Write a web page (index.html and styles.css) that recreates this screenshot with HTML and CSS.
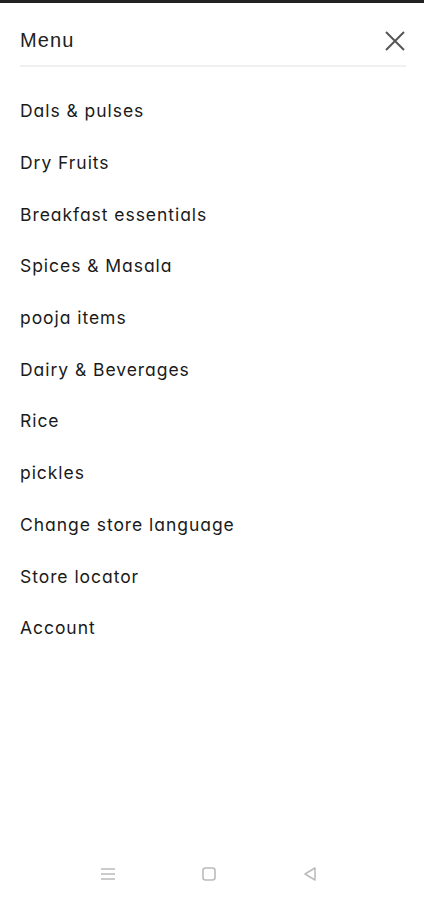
FILE: index.html
```html
<!DOCTYPE html>
<html lang="en">
<head>
  <meta charset="UTF-8" />
  <meta name="viewport" content="width=device-width, initial-scale=1.0" />
  <title>Menu</title>
  <link rel="stylesheet" href="styles.css">
</head>
<body>
  <div class="statusbar"></div>
  <div class="drawer">
    <div class="drawer-head">
      <span class="drawer-title">Menu</span>
      <button class="close-btn" aria-label="Close">
        <svg width="22" height="22" viewBox="0 0 22 22"><path d="M2 2 L20 20 M20 2 L2 20" stroke="#555" stroke-width="2" fill="none"/></svg>
      </button>
    </div>
    <ul class="menu-list">
      <li><a href="#">Dals &amp; pulses</a></li>
      <li><a href="#">Dry Fruits</a></li>
      <li><a href="#">Breakfast essentials</a></li>
      <li><a href="#">Spices &amp; Masala</a></li>
      <li><a href="#">pooja items</a></li>
      <li><a href="#">Dairy &amp; Beverages</a></li>
      <li><a href="#">Rice</a></li>
      <li><a href="#">pickles</a></li>
      <li><a href="#">Change store language</a></li>
      <li><a href="#">Store locator</a></li>
      <li><a href="#">Account</a></li>
    </ul>
  </div>
  <div class="navbar">
    <svg width="16" height="16" viewBox="0 0 16 16"><path d="M1 3 H15 M1 8 H15 M1 13 H15" stroke="#bbb" stroke-width="1.6"/></svg>
    <svg width="16" height="16" viewBox="0 0 16 16"><rect x="2" y="2" width="12" height="12" rx="2.5" stroke="#bbb" stroke-width="1.6" fill="none"/></svg>
    <svg width="16" height="16" viewBox="0 0 16 16"><path d="M13 2 V14 L3 8 Z" stroke="#bbb" stroke-width="1.5" fill="none" stroke-linejoin="round"/></svg>
  </div>
</body>
</html>
```

FILE: styles.css
```css
body { margin: 0; background: #fff; font-family: Inter, "Liberation Sans", sans-serif; color: #1a1a1a; height: 900px; display: flex; flex-direction: column; }
.statusbar { height: 3px; background: #222; }
.drawer { flex: 1; padding: 0 18px 0 20px; }
.drawer-head { display: flex; justify-content: space-between; align-items: center; height: 49px; border-bottom: 2px solid #f0f0f0; padding-top: 13px; }
.drawer-title { font-family: "Liberation Sans", Arial, sans-serif; font-size: 20px; letter-spacing: 1.1px; color: #222; }
.close-btn { background: none; border: 0; padding: 0; display: flex; }
.menu-list { list-style: none; margin: 0; padding: 18px 0 0; }
.menu-list li { height: 51.7px; display: flex; align-items: center; }
.menu-list a { text-decoration: none; color: #1a1a1a; font-size: 17.5px; font-feature-settings: "cv11", "ss01"; letter-spacing: 0.95px; }
.navbar { height: 52px; display: flex; justify-content: center; gap: 85px; align-items: center; padding-right: 6px; }
```
